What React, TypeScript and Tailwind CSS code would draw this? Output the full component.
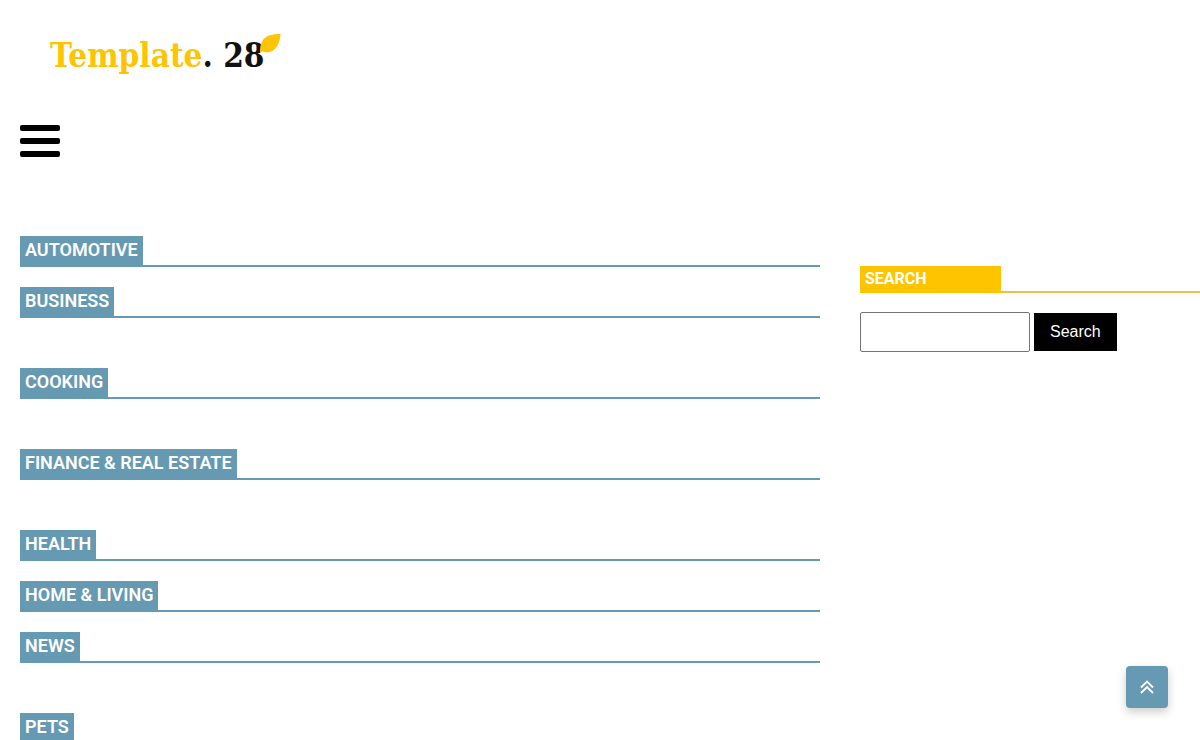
const categories = [
  { name: "Automotive", spacing: "mb-5" },
  { name: "Business", spacing: "mb-[50px]" },
  { name: "Cooking", spacing: "mb-[50px]" },
  { name: "Finance & Real Estate", spacing: "mb-[50px]" },
  { name: "Health", spacing: "mb-5" },
  { name: "Home & Living", spacing: "mb-5" },
  { name: "News", spacing: "mb-[50px]" },
  { name: "Pets", spacing: "mb-0" },
];

function Logo() {
  return (
    <a
      href="#"
      className="flex w-fit items-start font-['DejaVu_Serif_Condensed','DejaVu_Serif',serif] text-[33px] leading-[44px] font-bold text-[#111111]"
    >
      <span className="text-[#ffc400]">Template</span>
      <span>. 28</span>
      <svg
        viewBox="0 0 21 20"
        className="-ml-1 h-5 w-[21px]"
        fill="#ffc400"
        aria-hidden="true"
      >
        <path d="M0 19C-.5 10 3 3 10 1.200C13 .3 17 0 20.500 0C20 7 18 13 13 16.500C9 19 5 18.500 2.500 17.200Z" />
      </svg>
    </a>
  );
}

export default function App() {
  return (
    <div className="min-h-screen bg-white font-[Roboto,sans-serif]">
      {/* Header */}
      <header className="pt-[34px]">
        <div className="px-[50px]">
          <Logo />
        </div>
        <nav className="mt-[46px] px-5">
          <button type="button" aria-label="Menu" className="block py-px">
            <span className="block h-[6px] w-10 rounded-xs bg-black" />
            <span className="mt-[7px] block h-[6px] w-10 rounded-xs bg-black" />
            <span className="mt-[7px] block h-[6px] w-10 rounded-xs bg-black" />
          </button>
        </nav>
      </header>

      <div className="mt-[78px] flex items-start">
        {/* Categories */}
        <main className="w-[70%] px-5">
          {categories.map((category) => (
            <section key={category.name} className={category.spacing}>
              <h2 className="flex border-b-2 border-[#6699b2] text-lg leading-[27px] font-semibold text-white uppercase">
                <a href="#" className="bg-[#6699b2] px-[5px] pb-0.5">
                  {category.name}
                </a>
              </h2>
            </section>
          ))}
        </main>

        {/* Sidebar */}
        <aside className="w-[30%] pt-[30px] pl-5">
          <h2 className="flex border-b-2 border-[#e6c34a] text-base leading-[25px] font-bold text-white uppercase">
            <label
              htmlFor="search"
              className="-mb-0.5 w-[141px] bg-[#ffc400] px-[5px] pb-0.5"
            >
              Search
            </label>
          </h2>
          <form
            className="mt-[19px] flex items-center gap-1"
            onSubmit={(e) => e.preventDefault()}
          >
            <input
              id="search"
              type="text"
              className="h-10 w-[170px] rounded-xs border border-[#767676] px-2"
            />
            <button
              type="submit"
              className="h-[38px] bg-black px-4 font-['Liberation_Sans',sans-serif] text-base text-white"
            >
              Search
            </button>
          </form>
        </aside>
      </div>

      {/* Back to top */}
      <button
        type="button"
        aria-label="Back to top"
        onClick={() => window.scrollTo({ top: 0 })}
        className="fixed right-8 bottom-8 flex size-[42px] items-center justify-center rounded-sm bg-[#6699b2] text-white shadow-[0_4px_10px_rgba(0,0,0,0.2)]"
      >
        <svg
          viewBox="0 0 14 14"
          className="size-[14px]"
          fill="none"
          stroke="currentColor"
          strokeWidth="1.800"
          aria-hidden="true"
        >
          <path d="M1 7.500L7 1.500L13 7.500M1 13L7 7L13 13" />
        </svg>
      </button>
    </div>
  );
}
